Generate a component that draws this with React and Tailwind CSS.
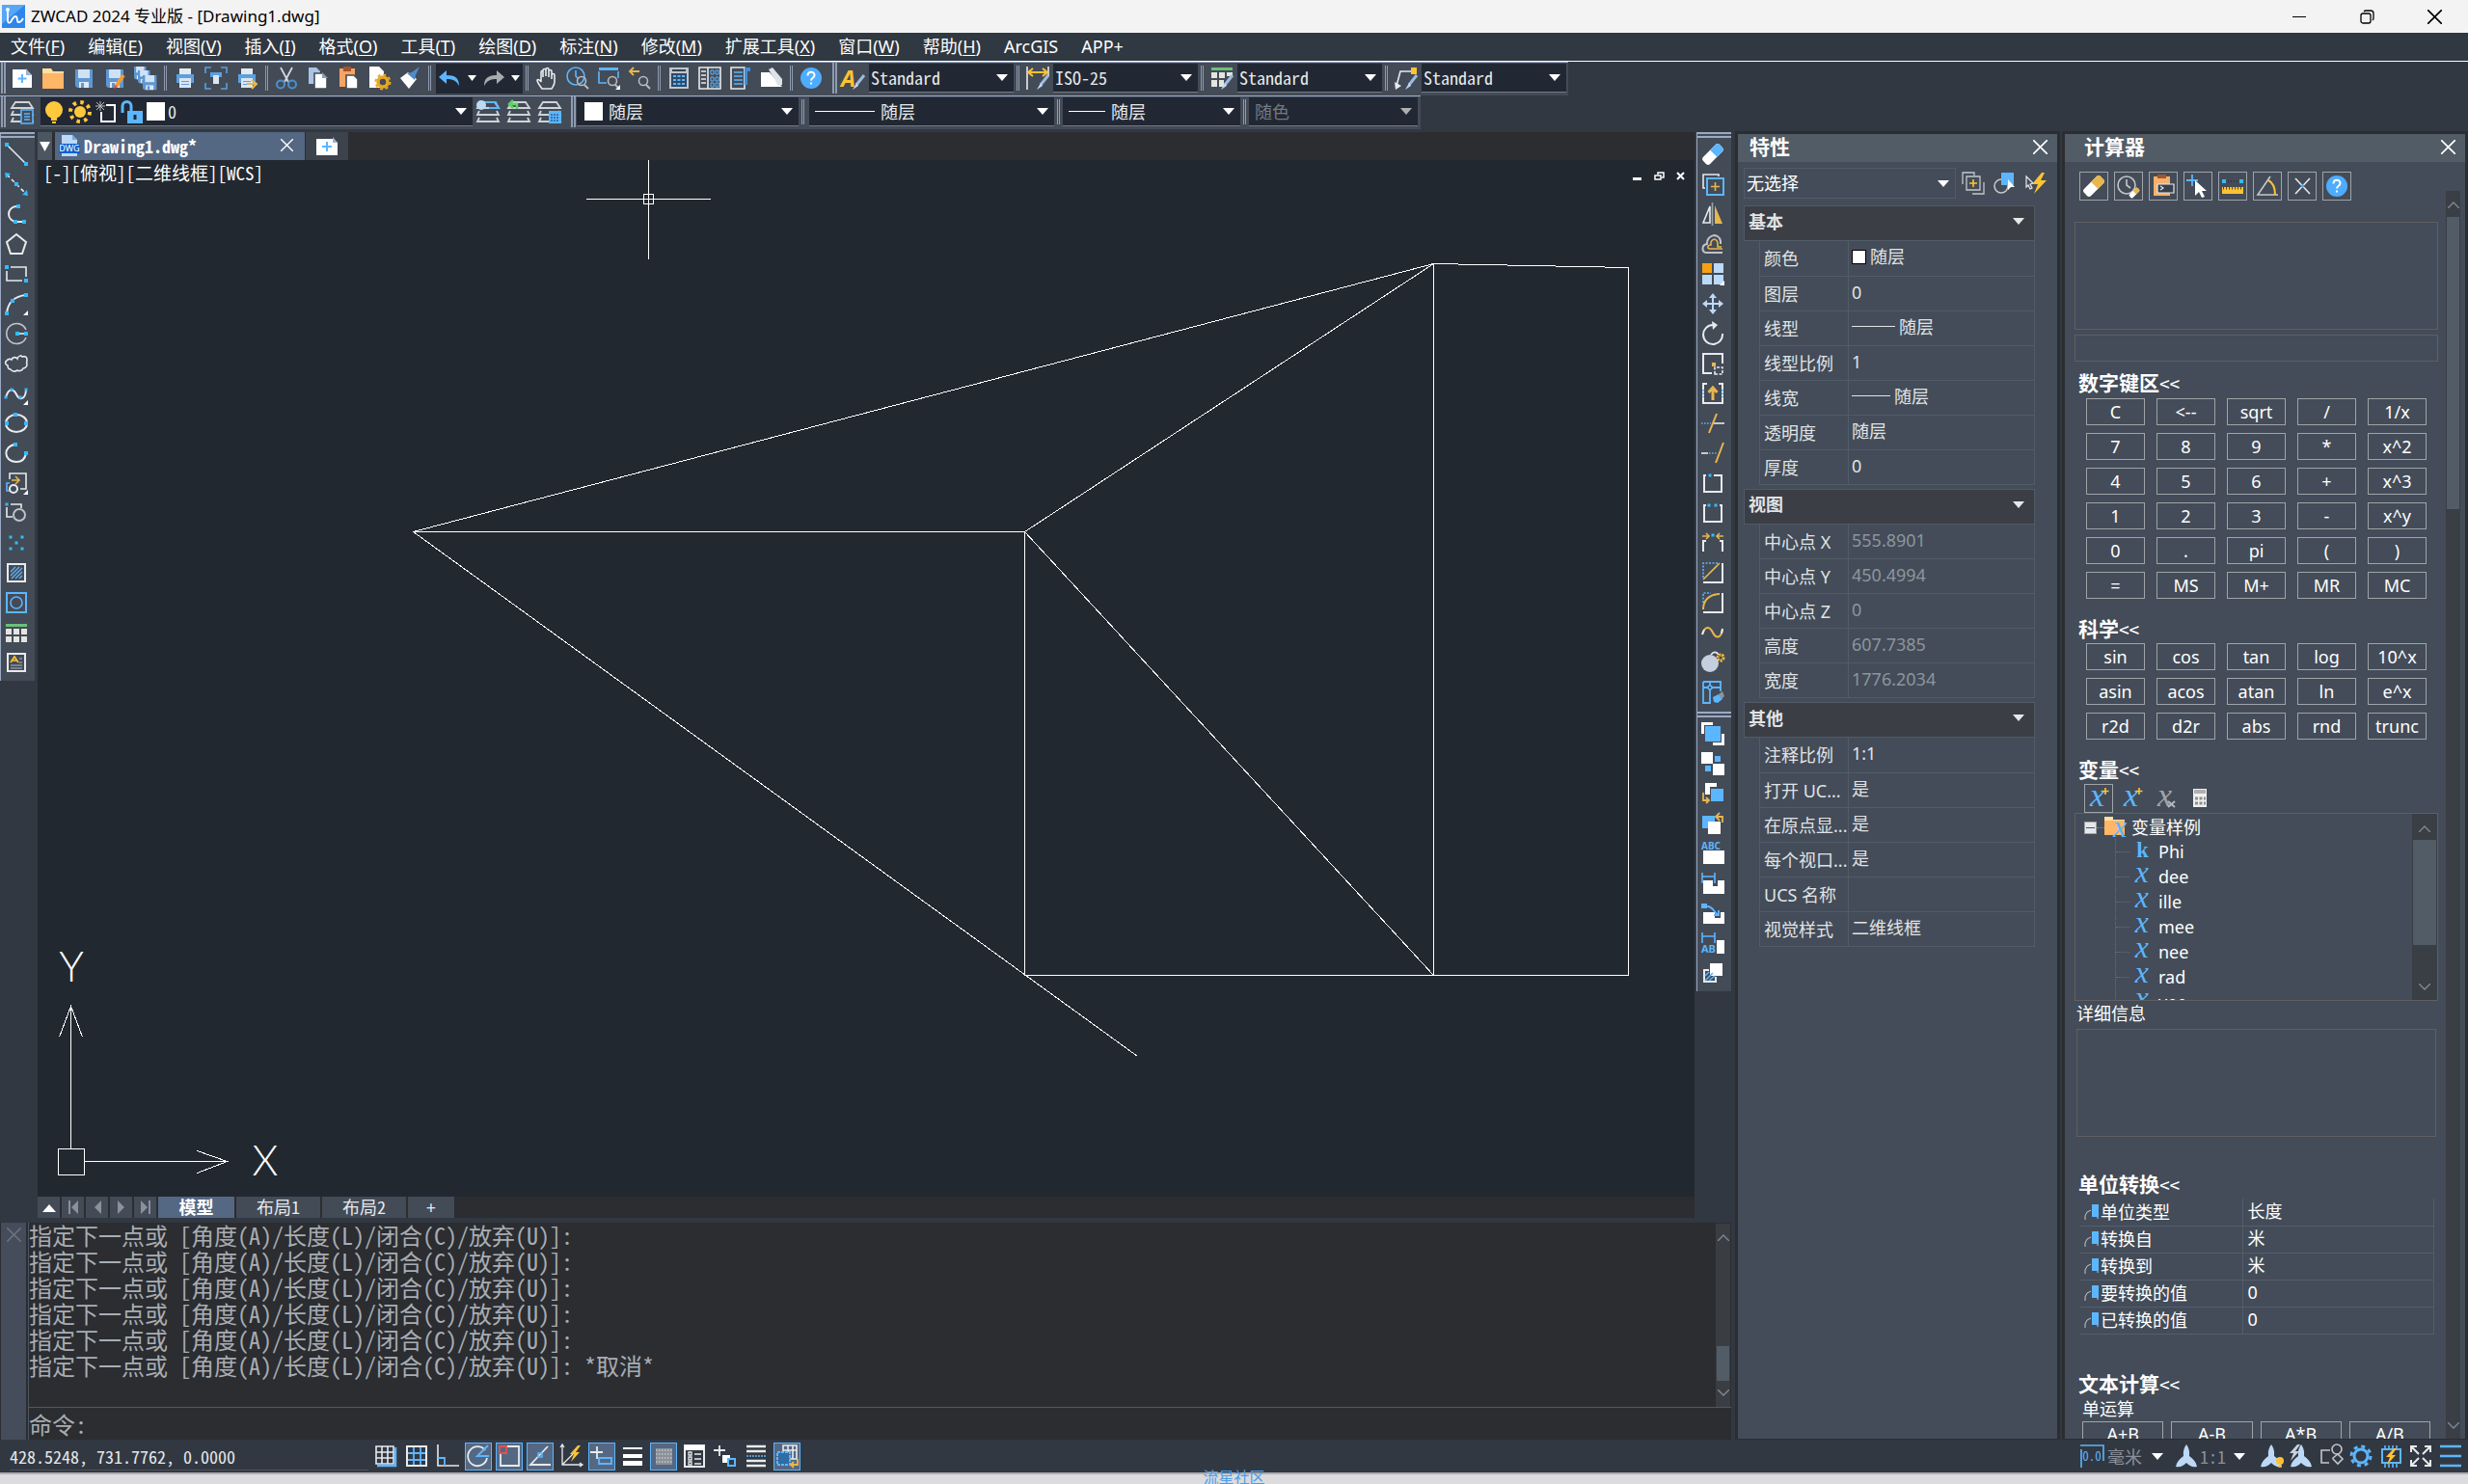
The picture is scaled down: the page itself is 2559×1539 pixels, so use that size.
import { useState } from 'react';
import clsx from 'clsx';

const mono = "font-[family-name:'Noto_Sans_Mono_CJK_SC','Liberation_Mono','Noto_Sans_CJK_SC',monospace]";

const W = '#e8eaec';
const B = '#5cb6ff';
const C = '#33bbff';
const Y = '#e8b64c';
const P = '#bcd9f7';

function Svg({ children, size = 24 }) {
  return (
    <svg width={size} height={size} viewBox="0 0 24 24" fill="none" stroke={W} strokeWidth="1.6" aria-hidden="true" className="shrink-0 overflow-visible">
      {children}
    </svg>
  );
}

// Blue grip squares at [x, y]
function Nodes({ at, r = 2 }) {
  return at.map(([x, y]) => (
    <rect key={`${x}-${y}`} x={x - r} y={y - r} width={r * 2} height={r * 2} fill={C} stroke="none" />
  ));
}

const More = () => <path d="M24 19v5h-5z" fill="#fff" stroke="none" />;

function Caret({ color = '#fff', className }) {
  return (
    <svg width="12" height="7" viewBox="0 0 12 7" aria-hidden="true" className={clsx('pointer-events-none shrink-0', className)}>
      <path d="M0 0h12L6 7z" fill={color} />
    </svg>
  );
}

function Chevron({ up }) {
  return (
    <svg width="12" height="7" viewBox="0 0 12 7" fill="none" stroke="#7d8894" strokeWidth="1.4" aria-hidden="true">
      <path d={up ? 'M0 7l6-6 6 6' : 'M0 0l6 6 6-6'} />
    </svg>
  );
}

function Cross({ size = 15, color = '#fff' }) {
  return (
    <svg width={size} height={size} viewBox="0 0 14 14" stroke={color} strokeWidth="1.5" aria-hidden="true">
      <path d="M0 0l14 14M14 0L0 14" />
    </svg>
  );
}

const Magnifier = () => (
  <>
    <circle cx="16" cy="15" r="4.5" stroke="#bbb" />
    <path d="M19 19l4 4" stroke="#bbb" strokeWidth="2" />
  </>
);

const Floppy = ({ x = 3, y = 3, s = 1 }) => (
  <g transform={`translate(${x} ${y}) scale(${s})`} stroke="none">
    <path d="M0 0h18v19H2l-2-2z" fill="#5f97d2" />
    <path d="M3 0h12v9H3z" fill="#cfe1f5" />
    <path d="M4 13h10v6H4z" fill="#dfe9f5" />
    <path d="M6 14h3v5H6z" fill="#5f97d2" />
  </g>
);

const Printer = () => (
  <g stroke="none">
    <path d="M6 2h12v6H6z" fill="#e5e9ee" />
    <path d="M3 8h18v9H3z" fill="#5ba0e0" />
    <path d="M6 12h12v10H6z" fill="#dbe6f2" />
    <path d="M8 15h8v1H8zM8 18h8v1H8z" fill="#5ba0e0" />
  </g>
);

const Brush = () => (
  <>
    <path d="M23 9l-8 10" stroke="#9dbce0" strokeWidth="3" />
    <path d="M15 17l-4 7 6-4z" fill={P} stroke="none" />
  </>
);

const Layers = ({ color = '#d0d3d7' }) => (
  <g stroke={color} strokeWidth="1.8">
    <path d="M5 2h14l4 6H1zM3 11l-2 4h22l-2-4M3 18l-2 4h22l-2-4" />
  </g>
);

const Help = () => (
  <>
    <circle cx="12" cy="12" r="11" fill="#4fadff" stroke="none" />
    <path d="M8.500 9.500c0-5 7-5 7-.5 0 3-3.500 2.500-3.500 5.500M12 16.500v2" stroke="#fff" strokeWidth="2" />
  </>
);

const Eraser = ({ color = B }) => (
  <g transform="rotate(45 12 12)" stroke="none">
    <rect x="7" y="0" width="10" height="24" rx="3" fill="#fff" />
    <path d="M7 11V3q0-3 3-3h4q3 0 3 3v8z" fill={color} />
  </g>
);

const Bolt = ({ x = 0, y = 0, color = '#ffc234' }) => (
  <path transform={`translate(${x} ${y})`} d="M8 0L0 9h4l-3 8L10 7H6l5-7z" fill={color} stroke="none" />
);

const fileTools = [
  ['新建', <><path d="M2 3h14l6 6v13H2z" fill="#fff" stroke="none" /><path d="M16 2l6 7h-6z" fill="#9fb4c8" stroke="none" /><path d="M12 8v9M7.500 12.500h9" stroke={B} strokeWidth="2" /></>],
  ['打开', <g stroke="none"><path d="M1 2h9l2 3h11v18H1z" fill="#ffe0a0" /><path d="M1 7h22v16H1z" fill="#ffb667" /></g>],
  ['保存', <Floppy />],
  ['另存为', <><Floppy /><path d="M21 9l-8 12" stroke="#f59a2f" strokeWidth="4" /><path d="M11 23l1-4 3 2z" fill="#e34a3a" stroke="none" /></>],
  ['全部保存', <><Floppy x={0} y={0} s={0.7} /><Floppy x={4} y={4} s={0.7} /><Floppy x={9} y={9} s={0.8} /></>],
];
const printTools = [
  ['打印', <Printer />],
  ['打印预览', <><path d="M1 7V1h6M17 1h6v6M23 17v6h-6M7 23H1v-6" stroke="#5ba0e0" /><path d="M6 6h12v5H6z" fill="#5ba0e0" stroke="none" /><path d="M9 9h6v9H9z" fill="#dbe6f2" stroke="none" /></>],
  ['发布', <><Printer /><path d="M12 18h9M17 14l5 4-5 5" stroke={Y} strokeWidth="2" /></>],
];
const editTools = [
  ['剪切', <><path d="M6 1l8 15M18 1l-8 15" stroke="#d5d8dc" strokeWidth="1.8" /><circle cx="6" cy="18.500" r="4" stroke="#4d8fcf" strokeWidth="2" /><circle cx="18" cy="18.500" r="4" stroke="#4d8fcf" strokeWidth="2" /></>],
  ['复制', <g stroke="none"><path d="M3 1h8l4 4v13H3z" fill="#a9c4e4" /><path d="M9 7h9l4 4v12H9z" fill="#fff" stroke="#434b57" /><path d="M17 6v6h6z" fill="#8aa0b8" /></g>],
  ['粘贴', <g stroke="none"><path d="M3 2h16v19H3z" fill="#f5a562" /><path d="M7 0h8v5H7z" fill="#a5542b" /><path d="M10 9h8l4 4v10H10z" fill="#fff" stroke="#434b57" /></g>],
  ['选项', <><path d="M2 0h10l5 5v17H2z" fill="#fff" stroke="none" /><circle cx="16" cy="16" r="5" stroke="#e8a820" strokeWidth="3.500" fill="#434b57" /><circle cx="16" cy="16" r="7.500" stroke="#e8a820" strokeWidth="2" strokeDasharray="3 2.900" /></>],
  ['特性匹配', <g stroke="none"><path d="M10 6l9 7-8 10-9-11z" fill="#fff" /><path d="M9 7l5-1 8-6-4 9-1 5z" fill="#4f8bc9" /></g>],
];
const viewTools = [
  ['平移', <path d="M7 23c-2-3-5-6-5-9 1-1 3 0 4 2V6c0-2 2-2 2 0v5-7c0-2 3-2 3 0v6-7c0-2 3-2 3 0v8-6c0-2 3-2 3 0v8-4c0-2 3-2 3 0v7c0 3-2 5-3 7z" />],
  ['缩放', <><circle cx="10" cy="10" r="9" stroke={B} /><path d="M10 4v6l3 3" stroke={B} /><Magnifier /></>],
  ['窗口缩放', <><path d="M2 1h20v3H2z" fill={B} stroke="none" /><path d="M22 5v7M2 5v12h8" stroke={B} /><Magnifier /><More /></>],
  ['上一个', <><path d="M12 5H2M6 1L2 5l4 4" stroke={Y} strokeWidth="1.800" /><Magnifier /></>],
];
const paletteTools = [
  ['快速计算器', <><path d="M2 1h20v22H2z" fill="#bfc6cf" stroke="none" /><path d="M5 4h14" stroke="#3a4450" strokeWidth="2" /><path d="M4 7h16v14H4z" fill="#2d4a68" stroke="none" /><path d="M6 10h12M6 14h12M6 18h12" stroke={B} strokeDasharray="3 1.500" strokeWidth="2" /></>],
  ['设计中心', <><path d="M1 1h9v22H1zM10 1h13v22H10z" /><path d="M3 5h5M3 9h5M3 13h5M3 17h5" /><path d="M13 4h3v4h-3zM18 4h3v4h-3zM13 11h3v4h-3zM18 11h3v4h-3zM13 17h3v4h-3zM18 17h3v4h-3z" stroke={B} strokeWidth="1" /></>],
  ['工具选项板', <><path d="M2 1h14v22H2z" /><path d="M5 6h9M5 10h9M5 14h9M5 18h9" stroke={B} /><path d="M16 1h6v4h-3v14h-3z" fill="#3f8fd8" stroke="none" /></>],
  ['图纸集', <g stroke="none"><path d="M1 6h9l5 6 8 9H1z" fill="#fff" /><path d="M9 3l4-2 10 12v6l-4 1z" fill="#dfe2e6" /></g>],
];

const drawTools = [
  ['直线', <><path d="M2 2l20 20" /><Nodes at={[[2, 2], [22, 22]]} /></>],
  ['构造线', <><path d="M2 2l20 20" strokeDasharray="4 3" /><path d="M0 0l6 1-5 5zM24 24l-6-1 5-5z" fill={C} stroke="none" /><Nodes at={[[12, 12]]} /></>],
  ['多段线', <><path d="M14 4h-2a8 8 0 0 0 0 16h9" strokeWidth="2" /><Nodes at={[[14, 4], [11, 20], [20, 20]]} /></>],
  ['正多边形', <path d="M12 2l10 8-4 12H6L2 10z" strokeWidth="2" />],
  ['矩形', <><path d="M6 5h16v10M18 19H2V9" /><Nodes at={[[2, 5], [22, 19]]} /></>],
  ['圆弧', <><path d="M2 22C3 11 10 4 22 3" strokeWidth="2" /><Nodes at={[[2, 22], [8, 9], [22, 3]]} /><More /></>],
  ['圆', <><path d="M22 8a10.500 10.500 0 1 0 0 8" stroke="#bfc3c8" /><path d="M13 12h9" /><Nodes at={[[13, 12], [22, 12]]} /></>],
  ['修订云线', <path d="M2 9c1-2 4-2 5-1 1-3 5-3 6-1 1-3 4-4 5-2 3-1 5 0 5 3 0 2-1 3 0 5 0 3-3 4-4 4-1 3-5 3-6 2-3 2-6 1-7-1-3 0-3-2-3-4-3-1-3-4-1-5z" />],
  ['样条曲线', <><path d="M1 16c3-10 8-9 11-3s9 6 10-4" strokeWidth="2" /><Nodes at={[[1, 16], [7, 8], [16, 16], [22, 8]]} r={1.5} /><More /></>],
  ['椭圆', <><ellipse cx="12" cy="12" rx="11" ry="9" strokeWidth="2" /><Nodes at={[[2, 12], [11, 3], [22, 12]]} /></>],
  ['椭圆弧', <><path d="M11 3C-2 4-2 21 12 21c6 0 9-3 10-9" strokeWidth="2" /><Nodes at={[[11, 3], [22, 12]]} /></>],
  ['插入块', <><path d="M5 8V2h17v16h-6" /><path d="M5 12H2v8h3" stroke={B} /><path d="M7 9h7M11 5l4 4-4 4" stroke={Y} /><circle cx="9" cy="18" r="4" fill="#434b57" strokeWidth="2" /><More /></>],
  ['创建块', <><path d="M6 3h11v4M2 6v10h6" /><Nodes at={[[2, 3]]} r={1.5} /><circle cx="15" cy="14" r="6" stroke="#bfc3c8" strokeWidth="2" /></>],
  ['点', <Nodes at={[[6, 6], [18, 6], [12, 12], [6, 18], [18, 18]]} r={1.5} />],
  ['图案填充', <><path d="M3 3h18v18H3z" strokeWidth="2" /><path d="M6 11l5-5M6 15l9-9M7 18L18 7M11 18l7-7M15 18l3-3" stroke={B} strokeWidth="1.200" /></>],
  ['面域', <><path d="M2 2h20v20H2z" stroke={B} strokeWidth="2" /><circle cx="12" cy="12" r="6" stroke={B} /></>],
  ['表格', <><path d="M1 3h22v3H1z" fill="#6cc07a" stroke="none" /><path d="M1 8h6v6H1zM9 8h6v6H9zM17 8h6v6h-6zM1 16h6v6H1zM9 16h6v6H9zM17 16h6v6h-6z" fill="#e4e4e0" stroke="none" /></>],
  ['多行文字', <><path d="M3 3h18v18H3z" strokeWidth="2" /><path d="M6 12l4-6 4 6M8 10h4" stroke="#ffc234" /><path d="M15 8h3M15 12h3M6 15h12M6 18h12" stroke="#aeb9c6" strokeWidth="1.200" /></>],
];

const modifyTools = [
  ['删除', <Eraser />],
  ['复制对象', <><path d="M4 16H2V2h16v2" /><path d="M6 6h17v17H6z" stroke={B} strokeWidth="2" /><path d="M14.500 10v9M10 14.500h9" stroke={Y} /></>],
  ['镜像', <><path d="M9 4v17H2z" /><path d="M14 3l8 19h-8z" fill={Y} stroke="none" /><path d="M11.500 0v24" stroke="#9aa3ad" /></>],
  ['偏移', <><path d="M22 21H6C0 21 0 13 6 12 5 3 18-1 20 9v3" stroke="#bfc3c8" strokeWidth="2" /><path d="M22 17H9c-3 0-3-4 1-4-1-7 7-8 7-1v3h4" stroke={Y} /></>],
  ['阵列', <g stroke="none"><path d="M1 1h10v10H1z" fill="#f7a111" /><path d="M13 1h10v10H13zM1 13h10v10H1zM13 13h10v10H13z" fill={P} /><More /></g>],
  ['移动', <><path d="M12 3v18M3 12h18" stroke={P} strokeWidth="2" /><path d="M12 1L8 6h8zM12 23l-4-5h8zM1 12l5-4v8zM23 12l-5-4v8z" fill={P} stroke="none" /></>],
  ['旋转', <><path d="M12 3a10 10 0 1 0 10 9" strokeWidth="2" /><path d="M11-1l6 4-5 5z" fill={W} stroke="none" /></>],
  ['缩放对象', <><path d="M22 12V2H2v20h9" strokeWidth="2" /><path d="M14 23v-7h8v7z" strokeDasharray="3 1.500" /><path d="M11 11h4v4h-4z" fill={Y} stroke="none" /></>],
  ['拉伸', <><path d="M6 2H2v20h20V2h-4" strokeWidth="2" /><path d="M2 8v8M22 8v8" stroke={B} strokeDasharray="1.500 2" strokeWidth="2" /><path d="M12 19V8M7.500 11L12 6l4.500 5" stroke={Y} strokeWidth="3" /></>],
  ['修剪', <><path d="M0 12h10" stroke={B} strokeDasharray="1.500 1.500" /><path d="M13 12h11" /><path d="M16 2L8 22" stroke={Y} strokeWidth="2" /></>],
  ['延伸', <><path d="M8 12h9" stroke={B} strokeDasharray="1.500 1.500" /><path d="M0 12h7" /><path d="M23 1l-8 21" stroke={Y} strokeWidth="2" /></>],
  ['打断于点', <><path d="M5 4H3v17h18V4h-8" strokeWidth="2" /><Nodes at={[[9, 4]]} r={1.5} /></>],
  ['打断', <><path d="M5 4H3v17h18V4h-2" strokeWidth="2" /><Nodes at={[[8, 4], [15, 4]]} r={1.5} /></>],
  ['合并', <><path d="M2 21V10h3M22 21V10h-3" strokeWidth="2" /><path d="M1 5h7M5 2l3 3-3 3M23 5h-7M19 2l-3 3 3 3" stroke={Y} /><Nodes at={[[12, 4]]} r={1.5} /></>],
  ['倒角', <><path d="M22 2v20H2" strokeWidth="2" /><path d="M2 17V2h16" stroke={B} strokeDasharray="2 1.500" /><path d="M2 19L19 2" stroke={Y} /></>],
  ['圆角', <><path d="M22 2v20H2" strokeWidth="2" /><path d="M2 12V2h8" stroke={B} strokeDasharray="2 1.500" /><path d="M2 19C2 9 9 3 19 3" stroke={Y} strokeWidth="2" /></>],
  ['光顺曲线', <><path d="M1 14c3-10 8-8 11-2s8 7 10-3" stroke={Y} strokeWidth="2" /><path d="M1 14l2-5M21 13l1-5" strokeWidth="2" /></>],
  ['分解', <><circle cx="9" cy="13" r="9" fill="#c4cede" stroke="none" /><path d="M10 4c3-4 6-3 8 0" /><circle cx="20" cy="7" r="3" stroke="#ffc234" strokeWidth="3" strokeDasharray="2 1" /></>],
  ['编辑', <><path d="M2 1h18v10M2 1v22h7V1M2 7h18" stroke={B} strokeWidth="1.800" /><circle cx="9" cy="7" r="2" stroke={B} fill="#434b57" /><path d="M12 17l6-3 4 5-5 4-4-1z" fill={B} stroke="none" /><path d="M18 14l4-3 2 5-3 3z" fill="#8d939b" stroke="none" /></>],
];
const orderTools = [
  ['前置', <g stroke="none"><path d="M0 0h12v3H3v9H0zM24 24H12v-3h9v-9h3z" fill="#fff" /><path d="M4 4h16v16H4z" fill={B} /></g>],
  ['后置', <g stroke="none"><path d="M0 0h12v12H0zM12 12h12v12H12z" fill="#fff" /><path d="M14 4h6v6h-6zM4 14h6v6H4z" fill={B} /></g>],
  ['置于对象之上', <><path d="M4 1h12v4H9v8H4z" fill="#fff" stroke="none" /><path d="M10 7h13v13H10z" fill={B} stroke="none" /><path d="M2 11v8h6M5 16l3 3-3 3" stroke={Y} strokeWidth="1.800" /></>],
  ['置于对象之下', <><path d="M1 4h13v13H1z" fill={B} stroke="none" /><path d="M7 10h13v13H7z" fill="#fff" stroke="none" /><path d="M22 11V5h-6M19 1l-4 4 4 4" stroke={Y} strokeWidth="1.800" /></>],
  ['文字前置', <><path d="M2 9h22v14H2z" fill="#fff" stroke="none" /><text x="0" y="8" fontSize="10" fontWeight="700" fill={B} stroke="none">ABC</text></>],
  ['标注前置', <><path d="M2 9h10v6h5V9h7v14H2z" fill="#fff" stroke="none" /><path d="M1 1v11M14 1v11M1 5h13" stroke={B} /></>],
  ['引线前置', <><path d="M2 11h12v6h6v-6h4v12H2z" fill="#fff" stroke="none" /><path d="M0 2h6v5H0z" fill={B} stroke="none" /><path d="M6 5c7 0 6 6 12 9M13 14h5v-5" stroke={B} strokeWidth="1.800" /></>],
  ['全部注释前置', <><path d="M16 9h8v14h-8z" fill="#fff" stroke="none" /><path d="M1 1v11M14 1v11M1 5h13" stroke={B} /><text x="0" y="22" fontSize="11" fontWeight="700" fill={B} stroke="none">AB</text></>],
  ['填充后置', <><path d="M9 2h13v13H9z" fill="#fff" stroke="none" /><path d="M8 9H3v12h12v-5" strokeWidth="2" /><path d="M4 15l4-4M4 20l8-8M8 20l6-5" stroke={B} /></>],
];

const statusTools = [
  ['栅格', false, <><path d="M2 2h18v18H2zM8 2v18M14 2v18M2 8h18M2 14h18" /><path d="M3 22h19V3" stroke={B} strokeWidth="2.500" /></>],
  ['捕捉', false, <><path d="M9 3v18M16 3v18M3 9h18M3 16h18" stroke={B} strokeWidth="1.800" /><path d="M2 2h20v20H2z" strokeWidth="2" /></>],
  ['正交', false, <><path d="M2 0v22h22" /><path d="M2 14h7v8" stroke={B} strokeWidth="1.800" /></>],
  ['极轴', true, <><path d="M19 6a10 10 0 1 0 2 8" strokeWidth="1.800" /><path d="M22 1L11 12h12" stroke={B} strokeWidth="2" /></>],
  ['对象捕捉', true, <><path d="M9 2h13v20H3V9" strokeWidth="1.800" /><path d="M2 2h7v7H2z" stroke="#e35050" strokeWidth="1.800" /></>],
  ['对象追踪', true, <><path d="M20 2L2 21h21" strokeWidth="1.800" /><path d="M10 9h4v4h-4z" stroke={B} /></>],
  ['动态UCS', false, <><path d="M3 0v21h21M3 21l11-11M1 3l2-3 2 3M21 19l3 2-3 2" strokeWidth="1.300" /><Bolt x={11} y={1} /></>],
  ['动态输入', true, <><path d="M7 2v13M0 8h13" strokeWidth="1.800" /><path d="M9 14h13v6H9z" stroke={B} strokeWidth="1.800" /></>],
  ['线宽', false, <path d="M2 3h20v2H2zM2 10h20v4H2zM2 17h20v5H2z" fill="#fff" stroke="none" />],
  ['透明度', true, <><path d="M4 4h17v17H4z" fill="#8b9099" stroke="none" /><path d="M4 6h17M4 10h17M4 14h17M4 18h17" stroke="#c4c7cb" strokeDasharray="1.500 1.500" /></>],
  ['快捷特性', false, <><path d="M2 1h20v22H2z" strokeWidth="2" /><path d="M2 1h20v5H2z" fill="#fff" stroke="none" /><path d="M6 8h3v3H6zM6 13h3v3H6zM6 18h3v3H6zM12 10h7M12 15h7M12 20h7" strokeWidth="1.300" /></>],
  ['选择循环', false, <><path d="M6 1v11M0 6h12" strokeWidth="1.800" /><path d="M9 11h8v8H9z" fill="#fff" stroke="none" /><path d="M15 15h7v7h-7z" fill="#323842" stroke={B} strokeWidth="2" /></>],
  ['注释监视', false, <><path d="M2 2h20M2 7h20M2 17h20M2 22h20" strokeWidth="2.500" /><path d="M2 12h20" stroke={B} strokeDasharray="2 1" /></>],
  ['模型视口', true, <><path d="M8 1h14v14H8zM13 1v14M18 1v14M8 6h14" /><path d="M2 8h13v13H2z" fill="#2f6da5" stroke={B} strokeWidth="2" strokeDasharray="3 1" /><path d="M23 15v6h-6M19 18l-3 3 3 3" stroke={Y} strokeWidth="1.800" /></>],
];

const Compass = () => <path d="M12 0c4 6 3 9 3 12 4 3 7 6 8 11-5 1-8-1-11-4-3 3-6 5-11 4 1-5 4-8 8-11 0-3-1-6 3-12z" fill={P} stroke="none" />;

const settingTools = [
  ['注释可见性', <><Compass /><circle cx="21" cy="17" r="4" fill="#ffc234" stroke="none" /><path d="M19 23h4" stroke={Y} /></>],
  ['自动缩放', <><Compass /><Bolt x={0} y={0} color="#c8d2dc" /></>],
  ['隔离对象', <g stroke="#c3c7cc"><path d="M11 6H2v13h8M14 14l5-4 5 5-5 5-5-5z" /><circle cx="18" cy="5" r="5" /></g>],
  ['设置', <><circle cx="12" cy="12" r="7" stroke={B} strokeWidth="3" /><circle cx="12" cy="12" r="10" stroke={B} strokeWidth="3" strokeDasharray="4 3.850" /></>],
  ['硬件加速', <><path d="M3 5h19v14H3z" stroke={B} strokeWidth="2" /><path d="M6 1v3M10 1v3M14 1v3M18 1v3M6 20v4M10 20v4M14 20v4M18 20v4" stroke={B} /><Bolt x={7} y={4} /></>],
  ['全屏显示', <path d="M2 8V2h6M2 2l8 8M22 8V2h-6M22 2l-8 8M2 16v6h6M2 22l8-8M22 16v6h-6M22 22l-8-8" strokeWidth="2" />],
  ['菜单', <path d="M1 2h22M1 12h22M1 22h22" stroke={B} strokeWidth="2.500" />],
];

const calcTools = [
  ['清除', <Eraser color={Y} />],
  ['清除历史', <><circle cx="10" cy="11" r="9" stroke="#c3c7cc" /><path d="M10 5v6l4 3" stroke="#c3c7cc" /><g transform="translate(12 13) scale(.5)"><Eraser color={Y} /></g></>],
  ['粘贴到命令行', <><path d="M2 2h17v20H2z" fill="#f5b06a" stroke="none" /><path d="M6 0h9v4H6z" fill="#a5542b" stroke="none" /><path d="M6 10h17v9H6z" fill="#39414c" strokeWidth="1.200" /><path d="M9 12l3 2-3 2" strokeWidth="1.200" /></>],
  ['获取坐标', <><path d="M6 0v12M0 6h12" stroke={B} strokeWidth="1.800" /><path d="M9 6l12 11h-5l3 6-3 1-3-6-4 4z" fill="#fff" stroke="none" /></>],
  ['两点距离', <><Nodes at={[[3, 7], [21, 7]]} /><path d="M7 7h10" stroke="#2b2d31" strokeDasharray="1 2" /><path d="M1 13h22v7H1z" fill="#ffc234" stroke="none" /><path d="M2 14h20" stroke="#5a4a1a" strokeWidth="3" strokeDasharray="1 2" /></>],
  ['直线角度', <><path d="M15 2L2 21h21" stroke="#c3c7cc" /><path d="M13 6c6 3 7 9 7 15" stroke="#ffc234" strokeWidth="2" /></>],
  ['两线交点', <><path d="M5 4l15 16M20 4L5 20" /><Nodes at={[[12.5, 12]]} r={1.5} /></>],
  ['计算器帮助', <Help />],
];

const menus = [
  ['文件', 'F'], ['编辑', 'E'], ['视图', 'V'], ['插入', 'I'], ['格式', 'O'], ['工具', 'T'], ['绘图', 'D'],
  ['标注', 'N'], ['修改', 'M'], ['扩展工具', 'X'], ['窗口', 'W'], ['帮助', 'H'], ['ArcGIS'], ['APP+'],
];

const sections = [
  { title: '基本', rows: [['颜色', '随层', 'swatch'], ['图层', '0'], ['线型', '随层', 'line'], ['线型比例', '1'], ['线宽', '随层', 'short'], ['透明度', '随层'], ['厚度', '0']] },
  { title: '视图', muted: true, rows: [['中心点 X', '555.8901'], ['中心点 Y', '450.4994'], ['中心点 Z', '0'], ['高度', '607.7385'], ['宽度', '1776.2034']] },
  { title: '其他', rows: [['注释比例', '1:1'], ['打开 UC...', '是'], ['在原点显...', '是'], ['每个视口...', '是'], ['UCS 名称', ''], ['视觉样式', '二维线框']] },
];

const numberKeys = ['C', '<--', 'sqrt', '/', '1/x', '7', '8', '9', '*', 'x^2', '4', '5', '6', '+', 'x^3', '1', '2', '3', '-', 'x^y', '0', '.', 'pi', '(', ')', '=', 'MS', 'M+', 'MR', 'MC'];
const scienceKeys = ['sin', 'cos', 'tan', 'log', '10^x', 'asin', 'acos', 'atan', 'ln', 'e^x', 'r2d', 'd2r', 'abs', 'rnd', 'trunc'];
const variables = ['Phi', 'dee', 'ille', 'mee', 'nee', 'rad', 'vee'];
const conversions = [['单位类型', '长度'], ['转换自', '米'], ['转换到', '米'], ['要转换的值', '0'], ['已转换的值', '0']];
const prompt = '指定下一点或 [角度(A)/长度(L)/闭合(C)/放弃(U)]:';
const history = [prompt, prompt, prompt, prompt, prompt, `${prompt} *取消*`];

function Tool({ name, children, className = 'h-8 w-8' }) {
  return (
    <button type="button" aria-label={name} className={clsx('flex shrink-0 items-center justify-center', className)}>
      <Svg>{children}</Svg>
    </button>
  );
}

const Tools = ({ items, className }) => items.map(([name, icon]) => <Tool key={name} name={name} className={className}>{icon}</Tool>);

const Sep = () => (
  <div className="flex w-[9px] shrink-0 justify-center">
    <div className="h-[26px] w-[3px] border-x border-[#8e9bb0]" />
  </div>
);

const Grip = () => <div className="mx-px h-full w-[5px] shrink-0 border-x-2 border-[#8e9bb0]" />;

const GripTop = () => <div className="mb-px h-[6px] w-full border-y-2 border-[#9aaac2]" />;

function Combo({ label, value, disabled, className, children }) {
  return (
    <div className={clsx('flex h-[30px] shrink-0 items-center border-b border-[#727985] bg-[#222833]', className)}>
      {children}
      <select aria-label={label} disabled={disabled} className={clsx('min-w-0 flex-1 appearance-none bg-transparent pb-px text-lg/6', mono, disabled ? 'text-[#727985]' : 'text-[#e6e8ea]')}>
        <option>{value}</option>
      </select>
      <Caret color={disabled ? '#b0b0b0' : '#fff'} className="mr-1.5" />
    </div>
  );
}

function TitleBar() {
  return (
    <header className="flex h-[34px] shrink-0 items-center bg-[#f3f3f3] pl-0.5 text-black">
      <svg width="24" height="24" viewBox="0 0 24 24" aria-hidden="true">
        <rect width="24" height="24" fill="#2f86e8" />
        <path d="M0 0h24L0 20z" fill="#58a6f5" />
        <path d="M6 5v11q0 4 3 2 3-6 5-6c3 0 1 6 3 6s4-2 5-4" fill="none" stroke="#fff" strokeWidth="1.800" />
        <circle cx="6" cy="5" r="2" fill="#fff" />
      </svg>
      <h1 className="ml-1.5 text-[17px]/6">ZWCAD 2024 专业版 - [Drawing1.dwg]</h1>
      <div className="ml-auto flex">
        <button type="button" aria-label="最小化" className="flex h-8 w-[70px] items-center justify-center"><span className="h-px w-3.5 bg-black" /></button>
        <button type="button" aria-label="还原" className="flex h-8 w-[70px] items-center justify-center">
          <svg width="15" height="15" viewBox="0 0 15 15" fill="none" stroke="#000" strokeWidth="1.300" aria-hidden="true"><rect x="1" y="4" width="10" height="10" rx="2" /><path d="M4 2q1-1 2-1h5q3 0 3 3v5q0 1-1 2" /></svg>
        </button>
        <button type="button" aria-label="关闭" className="flex h-8 w-[70px] items-center justify-center"><Cross color="#000" /></button>
      </div>
    </header>
  );
}

function MenuBar() {
  return (
    <nav className="flex h-[30px] shrink-0 items-center gap-6 border-b border-white bg-[#303841] pb-0.5 pl-[11px] text-lg/6 text-white">
      {menus.map(([label, key]) => (
        <button type="button" key={label}>{label}{key && <>(<u className="underline-offset-2">{key}</u>)</>}</button>
      ))}
    </nav>
  );
}

const styleCombos = [
  ['文字样式', 'Standard', <><text x="-1" y="21" fontSize="24" fill="#ffc234" stroke="none" fontStyle="italic" fontWeight="700">A</text><Brush /></>],
  ['标注样式', 'ISO-25', <><path d="M1 0v24M23 0v10" /><path d="M2 6h20M7 2L2 6l5 4M17 2l5 4-5 4" stroke="#ffc234" strokeWidth="2" /><Brush /></>],
  ['表格样式', 'Standard', <><path d="M1 1h22v3H1z" fill="#6cc07a" stroke="none" /><path d="M1 6h6v6H1zM9 6h6v6H9zM17 6h6v4h-6zM1 14h6v7H1zM9 14h5v7H9z" fill="#e4e4e0" stroke="none" /><Brush /></>],
  ['引线样式', 'Standard', <><path d="M2 20L6 5h11" /><path d="M17 1h6v7h-6z" fill="#ffc234" stroke="none" /><path d="M0 16l1 8 6-4z" fill={W} stroke="none" /><Brush /></>],
];

function Toolbars() {
  return (
    <div className="shrink-0 bg-[#323842] pb-0.5">
      <div className="flex h-[35px] w-fit items-center border-t border-[#9aaac2] bg-[#434b57] pb-0.5 pr-0.5">
        <Grip />
        <Tools items={fileTools} />
        <Sep />
        <Tools items={printTools} />
        <Sep />
        <Tools items={editTools} />
        <Sep />
        <div className="ml-0.5 flex h-[31px] w-[90px] items-center bg-[#222833]">
          <Tool name="放弃" className="h-8 w-7"><path d="M22 20c0-8-4-11-13-11V4L1 11l8 7v-5c6 0 10 1 13 7z" fill={B} stroke="none" /></Tool>
          <button type="button" aria-label="放弃列表" className="flex h-8 w-[18px] items-center justify-center"><svg width="9" height="6" viewBox="0 0 9 6"><path d="M0 0h9L4.500 6z" fill="#fff" /></svg></button>
          <Tool name="重做" className="h-8 w-7"><path d="M2 20c0-8 4-11 13-11V4l8 7-8 7v-5c-6 0-10 1-13 7z" fill="#a8abb0" stroke="none" /></Tool>
          <button type="button" aria-label="重做列表" className="flex h-8 w-4 items-center justify-center"><svg width="9" height="6" viewBox="0 0 9 6"><path d="M0 0h9L4.500 6z" fill="#fff" /></svg></button>
        </div>
        <Sep />
        <Tools items={viewTools} />
        <Sep />
        <Tools items={paletteTools} />
        <Sep />
        <Tool name="帮助"><Help /></Tool>
        <div className="ml-[5px] h-full"><Grip /></div>
        {styleCombos.map(([label, value, icon], i) => (
          <div key={label} className="flex items-center">
            {i > 0 && <Sep />}
            <Tool name={label}>{icon}</Tool>
            <Combo label={label} value={value} className="w-[150px] pl-0.5" />
          </div>
        ))}
      </div>
      <div className="flex h-[35px] w-fit items-center border-t border-[#9aaac2] bg-[#434b57] pb-0.5 pr-[3px]">
        <Grip />
        <Tool name="图层特性管理器" className="mr-[3px] h-8 w-8"><Layers /><path d="M11 10h12v14H11z" fill="#434b57" stroke={B} /><path d="M14 14h6M14 17h6M14 20h6" stroke={B} /></Tool>
        <Combo label="图层" value="0" className="w-[448px] gap-[3px] pl-0.5">
          <Svg><circle cx="12" cy="10" r="9" fill="#ffc83d" stroke="none" /><path d="M9 18h6v3H9zM10 22h4v2h-4z" fill="#ffc83d" stroke="none" /></Svg>
          <Svg><circle cx="12" cy="12" r="6" fill="#ffc83d" stroke="none" /><circle cx="12" cy="12" r="10" stroke="#ffc83d" strokeWidth="4" strokeDasharray="3.500 4.350" /></Svg>
          <Svg><path d="M12 5h9v17H7V12" stroke="#fff" strokeWidth="2" /><path d="M6 1v10M1 6h10M2 2l8 8M10 2l-8 8" stroke="#bbb" strokeWidth="1" /></Svg>
          <Svg><path d="M2 13V6c0-6 9-6 9 0v6" stroke={B} strokeWidth="3" /><path d="M7 11h16v13H7z" fill={B} stroke="none" /><path d="M15 15v5" stroke="#222833" strokeWidth="3" /></Svg>
          <span className="h-[19px] w-[19px] bg-white" />
        </Combo>
        <Tool name="图层隔离"><Layers /><circle cx="5" cy="5" r="5" fill={P} stroke="none" /><path d="M9 2h11l3 6h-10" stroke={B} strokeWidth="2" /></Tool>
        <Tool name="上一个图层"><Layers /><path d="M10 9V4H3M6 0L2 4l4 4" stroke="#5fd068" strokeWidth="2.500" /></Tool>
        <Tool name="图层状态"><Layers /><path d="M11 11h13v13H11z" fill={B} stroke="none" /><path d="M13 15h9M13 18h9M13 21h9" stroke="#2b5f92" strokeDasharray="2 1" /></Tool>
        <div className="ml-[5px] h-full"><Grip /></div>
        <Combo label="颜色控制" value="随层" className="w-[230px] gap-1.5 pl-2">
          <span className="h-[19px] w-[19px] bg-white" />
        </Combo>
        <Sep />
        <Combo label="线型控制" value="随层" className="ml-0.5 w-[254px] gap-1.5 pl-1.5">
          <span className="h-px w-[62px] bg-white" />
        </Combo>
        <Sep />
        <Combo label="线宽控制" value="随层" className="w-[184px] gap-1.5 pl-1.5">
          <span className="h-px w-[38px] bg-white" />
        </Combo>
        <Sep />
        <Combo label="打印样式控制" value="随色" disabled className="w-[175px] pl-1.5" />
      </div>
    </div>
  );
}

function Drawing() {
  return (
    <div className="relative min-h-0 flex-1 overflow-hidden bg-[#222830]">
      <svg className="absolute inset-0 h-full w-full" fill="none" stroke="#fff" strokeWidth="1" shapeRendering="crispEdges" aria-label="模型空间">
        <path d="M389.500 385.500L1447.500 107.500L1649.500 111.500V845.500H1023.500V385.500H389.500L1140.500 929.500M1023.500 385.500L1447.500 107.500V845.500L1023.500 385.500" />
        <path d="M633.500 0v103M569 40.500h129M628.500 35.500h10v10h-10z" />
        <path d="M34.500 877V1025M22.500 909.500l12-32 12 32M21.500 1025.500h27v27h-27zM48.500 1038.500H197M165.500 1027.500l31 11-31 12" />
        <text x="35" y="852" textAnchor="middle" fontSize="43" fontWeight="300" fill="#fff" stroke="none" className="font-[family-name:Lato,sans-serif]">Y</text>
        <text x="236" y="1053" textAnchor="middle" fontSize="43" fontWeight="300" fill="#fff" stroke="none" className="font-[family-name:Lato,sans-serif]">X</text>
      </svg>
      <div className="relative flex items-start justify-between pl-1.5 pr-2.5 text-white">
        <span className={clsx('text-[19px]/[26px]', mono)}>[-][俯视][二维线框][WCS]</span>
        <div className="flex items-center gap-3 pt-3">
          <button type="button" aria-label="最小化视图"><svg width="11" height="9"><path d="M1 7.500h9" stroke="#fff" strokeWidth="3" /></svg></button>
          <button type="button" aria-label="还原视图"><svg width="11" height="9" fill="none" stroke="#fff" strokeWidth="1.500"><path d="M1 4h6v4H1zM4 3V1h6v5H8" /></svg></button>
          <button type="button" aria-label="关闭视图"><svg width="9" height="9" stroke="#fff" strokeWidth="2"><path d="M1 1l7 7M8 1L1 8" /></svg></button>
        </div>
      </div>
    </div>
  );
}

function LayoutTabs() {
  const [active, setActive] = useState('模型');
  const steps = [
    ['展开', 'M5 16h14l-7-8z', '#fff'],
    ['首个', 'M7 4h2v14H7zM17 4v14l-7-7z', '#8b919a'],
    ['上一个', 'M16 4v14l-7-7z', '#8b919a'],
    ['下一个', 'M8 4v14l7-7z', '#8b919a'],
    ['末个', 'M15 4h2v14h-2zM7 4v14l7-7z', '#8b919a'],
  ];
  return (
    <div className="flex h-[22px] shrink-0 gap-0.5 bg-[#2b2d31] text-lg/5 text-[#e6e8ea]">
      {steps.map(([name, d, color]) => (
        <button type="button" key={name} aria-label={name} className="w-[23px] bg-[#434b57]">
          <svg width="22" height="22" viewBox="0 0 22 22" aria-hidden="true"><path d={d} fill={color} /></svg>
        </button>
      ))}
      {['模型', '布局1', '布局2'].map((tab) => (
        <button type="button" key={tab} onClick={() => setActive(tab)} className={clsx(mono, 'pb-0.5', tab === active ? 'w-[79px] bg-[#546883] font-bold text-white' : 'w-[87px] bg-[#434b57]')}>{tab}</button>
      ))}
      <button type="button" aria-label="新建布局" className="w-12 bg-[#434b57]">+</button>
    </div>
  );
}

function Editor() {
  return (
    <div className="flex min-h-0 flex-1 pr-1 pt-px">
      <div className="flex w-9 flex-col self-start border-l border-[#9aaac2] bg-[#434b57] pb-1">
        <GripTop />
        <Tools items={drawTools} className="h-[31px] w-8" />
      </div>
      <main className="ml-[3px] flex min-w-0 flex-1 flex-col">
        <div className="flex h-[29px] shrink-0 bg-[#2b2d31]">
          <button type="button" aria-label="文档列表" className="mr-[3px] flex w-[15px] items-center justify-center bg-[#4b5660]"><svg width="11" height="10" viewBox="0 0 11 10"><path d="M0 0h11L5.500 10z" fill="#fff" /></svg></button>
          <div className="flex w-[259px] items-center bg-[#546883] pb-0.5 pl-1 pr-3">
            <svg width="22" height="24" viewBox="0 0 22 24" aria-hidden="true">
              <path d="M3 1h11l5 5v17H3z" fill={P} />
              <path d="M14 1l5 5h-5z" fill="#6ea9e8" />
              <rect y="10" width="22" height="10" fill="#0e62d0" />
              <text x="11" y="18" textAnchor="middle" fontSize="9" fill="#fff">DWG</text>
            </svg>
            <span className={clsx('ml-1 flex-1 text-lg/6 font-bold text-white', mono)}>Drawing1.dwg*</span>
            <button type="button" aria-label="关闭文档"><Cross size={13} /></button>
          </div>
          <button type="button" aria-label="新建文档" className="ml-px flex w-11 items-center justify-center bg-[#3d434d]">
            <Svg><path d="M1 4h17l5 4v13H1z" fill="#fff" stroke="none" /><path d="M18 2l5 6h-5z" fill="#9fb4c8" stroke="none" /><path d="M12 7v10M7 12h10" stroke={B} strokeWidth="2" /></Svg>
          </button>
        </div>
        <Drawing />
        <LayoutTabs />
      </main>
      <div className="ml-0.5 w-9 self-start border-l border-[#9aaac2] bg-[#434b57] pb-1">
        <GripTop />
        <Tools items={modifyTools} className="h-[31px] w-8" />
        <div className="pt-[5px]"><GripTop /></div>
        <Tools items={orderTools} className="h-[31px] w-8" />
      </div>
    </div>
  );
}

function CommandLine() {
  return (
    <section className="mr-1 mt-[5px] flex h-[225px] shrink-0 bg-[#2b2d31] pl-px">
      <div className="flex w-[26px] justify-center bg-[#454c5c] pt-1"><button type="button" aria-label="关闭命令行" className="h-4"><Cross color="#6b7079" /></button></div>
      <div className={clsx('ml-0.5 flex min-w-0 flex-1 flex-col border-l border-[#4b5660] text-2xl text-[#a9adb3]', mono)}>
        <div className="flex h-[192px] border-b border-[#4b5a62]">
          <ol className="min-w-0 flex-1">
            {history.map((line, i) => <li key={i} className="h-[27px] whitespace-pre leading-[26px]">{line}</li>)}
          </ol>
          <div className="mr-px mt-px flex w-[15px] flex-col items-center bg-[#3a3e43] py-[11px]">
            <Chevron up />
            <div className="mt-auto h-9 w-[13px] bg-[#515c67]" />
            <div className="mt-[9px]"><Chevron /></div>
          </div>
        </div>
        <label className="flex flex-1 items-center leading-7">命令:<input className="min-w-0 flex-1 bg-transparent outline-none" /></label>
      </div>
    </section>
  );
}

function PanelTitle({ title, className }) {
  return (
    <div className={clsx('flex h-[29px] shrink-0 items-center justify-between bg-[#515c67] pb-[3px] pr-2.5', className)}>
      <h2 className="text-[21px]/[26px] font-bold text-white">{title}</h2>
      <button type="button" aria-label={`关闭${title}`}><Cross /></button>
    </div>
  );
}

function Properties() {
  return (
    <aside className="flex w-[337px] shrink-0 flex-col border-3 border-b border-[#2b2d31] bg-[#434c58] text-lg/6 text-[#e0e3e6]">
      <PanelTitle title="特性" className="pl-3" />
      <div className="mb-[7px] mt-1.5 flex items-center pl-1.5">
        <div className="mr-0.5 flex h-8 w-[220px] items-center border border-[#515c67]">
          <select aria-label="选择对象" className="min-w-0 flex-1 appearance-none bg-transparent pl-0.5 text-white"><option>无选择</option></select>
          <Caret className="mr-1.5" />
        </div>
        <Tool name="切换PICKADD"><g stroke="#c3c7cc"><path d="M1 13V1h12v3M5 5h14v14H5zM23 11v12H11" strokeWidth="1.300" /></g><path d="M12 8v8M8 12h8" stroke="#ffc234" /></Tool>
        <Tool name="选择对象"><circle cx="9" cy="15" r="7" stroke="#c3c7cc" /><path d="M9 1h13v13H9z" fill={B} stroke="none" /><path d="M16 8l7 8h-4l-3 3z" fill="#fff" stroke="none" /></Tool>
        <Tool name="快速选择"><path d="M3 5l7 7-3 1 2 4-2 1-2-4-2 2z" strokeWidth="1.200" /><path d="M19 1L9 13h6l-4 10L24 9h-6l4-8z" fill="#ffc234" stroke="none" /></Tool>
      </div>
      <div className="flex flex-col gap-1 pl-1.5 pr-[23px]">
        {sections.map((section) => (
          <section key={section.title}>
            <button type="button" className="flex h-9 w-full items-center justify-between border border-b-0 border-[#515c67] bg-[#3b3e45] pb-1 pl-1 pr-[10px]">
              <span className="font-bold">{section.title}</span>
              <Caret color="#e6e8ea" />
            </button>
            <div className="border-t border-[#515c67] pl-4">
              <table className="w-full table-fixed border-collapse">
                <tbody>
                  {section.rows.map(([label, value, mark]) => (
                    <tr key={label} className="h-9">
                      <th scope="row" className="w-[92px] overflow-hidden whitespace-nowrap border border-t-0 border-[#515c67] pl-1 pt-px text-left font-normal">{label}</th>
                      <td className={clsx('border border-t-0 border-[#515c67] pb-[3px] pl-[3px]', section.muted && 'text-[#8d959e]')}>
                        <div className="flex h-7 items-center gap-1">
                          {mark === 'swatch' && <span className="h-[15px] w-[15px] border border-black bg-white" />}
                          {mark === 'line' && <span className="h-px w-[45px] bg-[#e0e3e6]" />}
                          {mark === 'short' && <span className="h-px w-10 bg-[#e0e3e6]" />}
                          {value}
                        </div>
                      </td>
                    </tr>
                  ))}
                </tbody>
              </table>
            </div>
          </section>
        ))}
      </div>
    </aside>
  );
}

function Fold({ title, className }) {
  return (
    <button type="button" className={clsx('flex h-7 w-full shrink-0 pl-1 text-left text-[21px]/[26px] font-bold', className)}>
      {title}<span className={clsx('font-light', mono)}>&lt;&lt;</span>
    </button>
  );
}

function Keys({ keys, className }) {
  return (
    <div className={clsx('grid grid-cols-5 gap-x-3 gap-y-2 px-3', className)}>
      {keys.map((key) => <button type="button" key={key} className="h-7 border border-[#a0a4a8] pb-px">{key}</button>)}
    </div>
  );
}

const VarX = ({ color = B }) => <text x="3" y="20" fontSize="34" fontStyle="italic" fill={color} stroke="none" className="font-[family-name:'Liberation_Serif',serif]">x</text>;

const variableTools = [
  ['新建变量', true, <><VarX /><path d="M19 1v7M15.500 4.500h7" stroke="#ffc234" /></>],
  ['编辑变量', false, <><VarX /><path d="M19 1v7M15.500 4.500h7" stroke="#ffc234" /></>],
  ['删除变量', false, <><VarX color="#9fa4aa" /><path d="M14 15l7 6M21 15l-7 6" stroke="#b5b9be" strokeWidth="2" /></>],
  ['返回计算器', false, <><path d="M5 2h14v19H5z" fill="#f0f0f0" stroke="none" /><path d="M6 5h12" stroke="#b0b0b0" strokeWidth="4" /><path d="M7 12h11M7 17h11" stroke="#8d8d8d" strokeWidth="3" strokeDasharray="3 1.500" /></>],
];

function Calculator() {
  return (
    <aside className="ml-0.5 flex w-[421px] shrink-0 flex-col overflow-hidden border-3 border-b border-[#2b2d31] bg-[#434c58] text-lg/6 text-white">
      <PanelTitle title="计算器" className="pl-5" />
      <div className="flex min-h-0 flex-1 justify-between pr-[5px]">
        <div className="flex w-[387px] flex-col overflow-hidden pl-2.5">
          <div className="flex gap-1.5 pl-[5px] pt-2.5">
            <Tools items={calcTools} className="h-[30px] w-[30px] border border-[#a0a4a8]" />
          </div>
          <textarea aria-label="计算历史" className="mt-[22px] h-28 w-full shrink-0 resize-none border border-[#615f61] bg-transparent" />
          <input aria-label="表达式" className="mt-[5px] h-7 w-full shrink-0 border border-[#615f61] bg-transparent" />
          <Fold title="数字键区" className="mt-[9px]" />
          <Keys keys={numberKeys} className="mt-px" />
          <Fold title="科学" className="mt-[18px]" />
          <Keys keys={scienceKeys} />
          <Fold title="变量" className="mt-[18px]" />
          <div className="flex gap-[5px] pl-2.5">
            {variableTools.map(([name, boxed, icon]) => <Tool key={name} name={name} className={clsx('h-[30px] w-[30px] border', boxed ? 'border-[#a0a4a8]' : 'border-transparent')}>{icon}</Tool>)}
          </div>
          <div className="flex h-[195px] shrink-0 overflow-hidden border border-[#615f61]">
            <div className="min-w-0 flex-1 pl-[9px]">
              <div className="flex h-[26px] items-center pt-0.5">
                <button type="button" aria-label="折叠" className="flex h-[13px] w-[13px] items-center justify-center border border-[#a0a4a8] bg-[#e8e8e8]"><span className="h-px w-[9px] bg-[#2b4fa8]" /></button>
                <span className="w-2 border-t border-dotted border-[#7d8894]" />
                <Svg><path d="M0 1h9v3h12v16H0z" fill="#ffe0a0" stroke="none" /><path d="M0 5h21v15H0z" fill="#ffb667" stroke="none" /><text x="9" y="22" fontSize="32" fontStyle="italic" fill={B} stroke="none" className="font-[family-name:'Liberation_Serif',serif]">x</text></Svg>
                <span className="ml-1">变量样例</span>
              </div>
              <ul className="ml-8 border-l border-dotted border-[#66717d]">
                {variables.map((name) => (
                  <li key={name} className="flex h-[26px] items-center">
                    <span className="mr-1 w-3.5 border-t border-dotted border-[#66717d]" />
                    <Svg size={20}><text x={name === 'Phi' ? 4 : 2} y="19" fontSize={name === 'Phi' ? 27 : 38} fontStyle={name === 'Phi' ? 'normal' : 'italic'} fontWeight={name === 'Phi' ? 700 : 400} fill={B} stroke="none" className="font-[family-name:'Liberation_Serif',serif]">{name === 'Phi' ? 'k' : 'x'}</text></Svg>
                    <span className="ml-1.5">{name}</span>
                  </li>
                ))}
              </ul>
            </div>
            <div className="flex w-[26px] flex-col items-center bg-[#3a3e45] pb-2.5 pt-3">
              <Chevron up />
              <div className="mt-2 h-[109px] w-6 bg-[#515c67]" />
              <div className="mt-auto"><Chevron /></div>
            </div>
          </div>
          <label htmlFor="details" className="h-7 shrink-0 pl-0.5 leading-[26px]">详细信息</label>
          <textarea id="details" readOnly className="mx-0.5 mt-px h-28 shrink-0 resize-none border border-[#615f61] bg-transparent" />
          <Fold title="单位转换" className="mt-9" />
          <div className="pl-[5px] pr-1">
            <table className="w-full table-fixed border-collapse">
              <tbody>
                {conversions.map(([label, value]) => (
                  <tr key={label} className="h-7 border-b border-r border-[#515f6b]">
                    <th scope="row" className="w-[169px] text-left font-normal">
                      <div className="flex h-[26px] items-center gap-0.5 pl-[5px]">
                        <svg width="15" height="16" viewBox="0 0 15 16" fill="none" aria-hidden="true"><path d="M1 16v-4q1-5 6-6M14 15v-3" stroke="#c3c7cc" /><path d="M8 0h7v13H8z" fill={B} /></svg>
                        {label}
                      </div>
                    </th>
                    <td className="border-l border-[#515f6b] pb-0.5 pl-[5px]">{value}</td>
                  </tr>
                ))}
              </tbody>
            </table>
          </div>
          <Fold title="文本计算" className="mt-[38px]" />
          <div className="h-6 shrink-0 pl-2 leading-[22px]">单运算</div>
          <div className="grid shrink-0 grid-cols-4 gap-x-2 px-2">
            {['A+B', 'A-B', 'A*B', 'A/B'].map((key) => <button type="button" key={key} className="h-7 border border-[#a0a4a8] pb-0.5">{key}</button>)}
          </div>
        </div>
        <div className="mt-[30px] flex w-[15px] flex-col items-center bg-[#3a3e45] pb-2.5 pt-[11px]">
          <Chevron up />
          <div className="mt-[9px] h-[303px] w-[13px] bg-[#515c67]" />
          <div className="mt-auto"><Chevron /></div>
        </div>
      </div>
    </aside>
  );
}

function StatusBar() {
  return (
    <footer className="flex h-[34px] shrink-0 items-center bg-[#323842] pl-2.5 pr-[3px] text-[#e6e8ea]">
      <output className={clsx('mr-1 h-[30px] w-[372px] border-b border-[#4b525d] text-lg/[30px]', mono)}>428.5248, 731.7762, 0.0000</output>
      <div className="flex gap-1">
        {statusTools.map(([name, on, icon]) => <Tool key={name} name={name} className={clsx('h-[29px] w-7 border', on ? 'border-[#5cb6ff] bg-[#546883]' : 'border-transparent')}>{icon}</Tool>)}
      </div>
      <div className={clsx('ml-auto flex items-center text-lg/6 text-[#8b9099]', mono)}>
        <Svg><path d="M1 24V5M0 1h24v16" stroke={B} /><text x="12" y="17" textAnchor="middle" fontSize="13" fill={B} stroke="none">0.0</text></Svg>
        <button type="button" className="ml-1 flex items-center gap-2">毫米<Caret className="mx-0.5" /></button>
        <span className="ml-[10px] flex"><Svg><Compass /></Svg></span>
        <button type="button" className="ml-0.5 mr-[3px] flex items-center gap-2">1:1<Caret className="mr-2" /></button>
        <Tools items={settingTools} className="h-8 w-[31px]" />
      </div>
    </footer>
  );
}

export default function App() {
  return (
    <div className="flex h-screen flex-col overflow-hidden bg-[#323842] font-[family-name:'Noto_Sans','Noto_Sans_CJK_SC',sans-serif]">
      <TitleBar />
      <MenuBar />
      <Toolbars />
      <div className="flex min-h-0 flex-1">
        <div className="flex min-w-0 flex-1 flex-col">
          <Editor />
          <CommandLine />
        </div>
        <Properties />
        <Calculator />
      </div>
      <StatusBar />
      {/* Edge of the desktop behind the window */}
      <div className="flex h-3 shrink-0 justify-center border-t-2 border-[#adadb0] bg-[#dcdbdd]">
        <a href="#community" className="-mt-[7px] h-[17px] overflow-hidden text-base/5 text-[#4a9fe8]">流星社区</a>
      </div>
    </div>
  );
}
